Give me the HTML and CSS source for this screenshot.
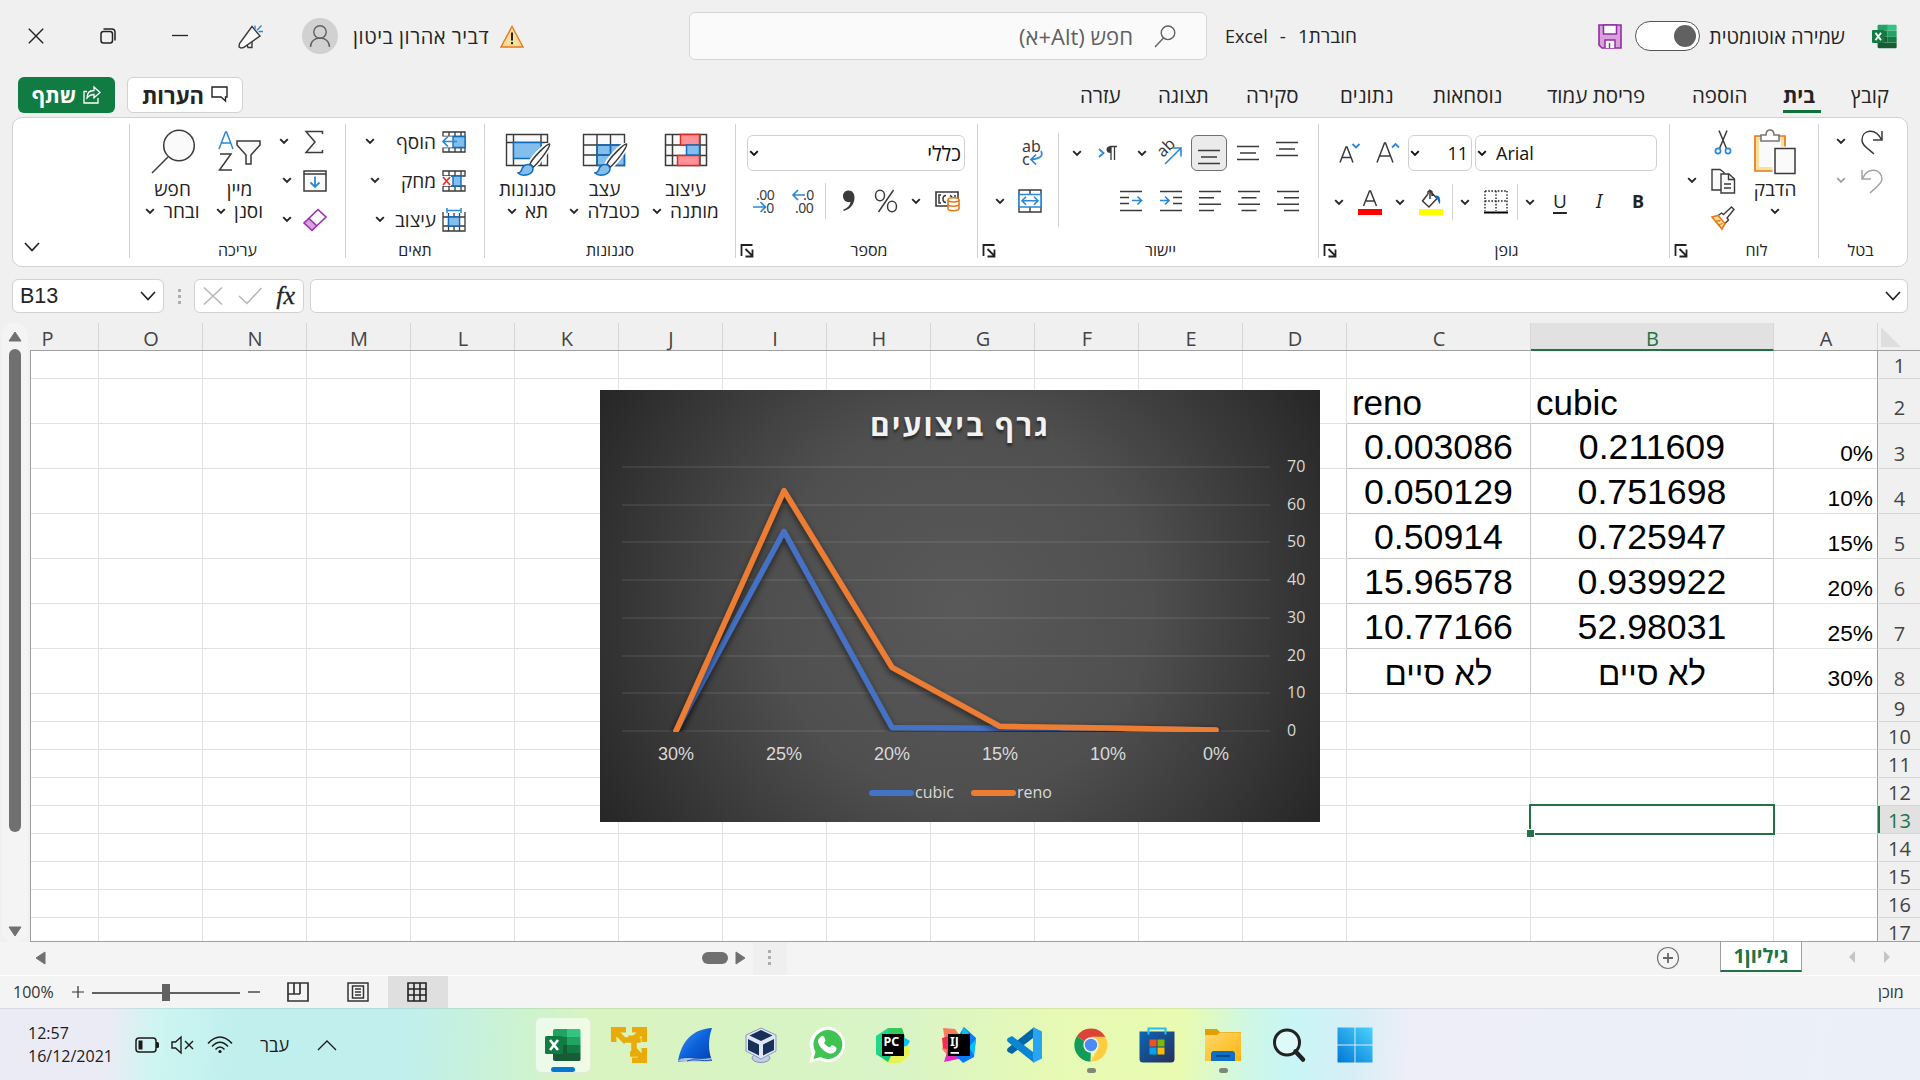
FILE: index.html
```html
<!DOCTYPE html>
<html lang="he">
<head>
<meta charset="utf-8">
<title>חוברת1 - Excel</title>
<link rel="stylesheet" href="styles.css">
</head>
<body>
<svg class="defs" width="0" height="0">
  <symbol id="chev" viewBox="0 0 10 7"><path d="M1.2 1.2 5 5l3.800-3.800" fill="none" stroke="currentColor" stroke-width="1.900"/></symbol>
  <symbol id="chev-lg" viewBox="0 0 16 10"><path d="M1 1l7 7.500L15 1" fill="none" stroke="currentColor" stroke-width="1.700"/></symbol>
  <symbol id="launch" viewBox="0 0 14 14"><path d="M1 12V1h11M5 5l7 7M12 5.500V12.500H5" fill="none" stroke="#222" stroke-width="1.800"/></symbol>
  <symbol id="excel" viewBox="0 0 36 34">
    <path d="M10 1h13v8H8V3q0-2 2-2z" fill="#21a366"/><path d="M22 1h12q1.500 0 1.500 1.500V9H22z" fill="#33c481"/>
    <path d="M8 9h14v8H8z" fill="#107c41"/><path d="M22 9h13.500v8H22z" fill="#21a366"/>
    <path d="M8 17h14v8H8z" fill="#185c37"/><path d="M22 17h13.500v8H22z" fill="#107c41"/>
    <path d="M8 25h27.500v6.500Q35.500 33 34 33H10q-2 0-2-2z" fill="#185c37"/>
    <rect x="0" y="8" width="18" height="18" rx="1.500" fill="#107c41"/>
    <path d="M5 12l8 10M13 12L5 22" stroke="#fff" stroke-width="2.600"/>
  </symbol>
  <symbol id="brush" viewBox="0 0 34 34">
    <path d="M32.500 1c-2-1-17 14-19.500 20l3.500 3C21 20 34 4 32.500 1z" fill="#fff" stroke="#fff" stroke-width="5"/>
    <path d="M32.500 1c-2-1-17 14-19.500 20l3.500 3C21 20 34 4 32.500 1z" fill="#fff" stroke="#3b3a39" stroke-width="1.500"/>
    <path d="M1 30c4-.500 3-3 5-6 2.500-3.500 8-3 9.500 0 1.500 3.500-1 7-5 7.700C7 32.500 3 32 1 30z" fill="#83beec" stroke="#0f6cbd" stroke-width="1.500"/>
  </symbol>
</svg>

<header class="title-bar">
  <svg width="16" height="16" viewBox="0 0 16 16"><path d="M.8.800l14.400 14.400M15.200.800L.8 15.200" stroke="#222" stroke-width="1.400"/></svg>
  <svg width="16" height="16" viewBox="0 0 16 16" fill="none" stroke="#222" stroke-width="1.500"><rect x="1" y="3.500" width="11.500" height="11.500" rx="2.500"/><path d="M3.500 1h8.200Q15 1 15 4.200v8.300"/></svg>
  <svg width="16" height="16" viewBox="0 0 16 16"><path d="M0 7.500h16" stroke="#222" stroke-width="1.300"/></svg>
  <svg width="26" height="25" viewBox="0 0 26 25" fill="none" stroke="#3b3a39" stroke-width="1.400"><path d="M14 2.500L1.500 19.500 1 22.800l2 1.300 2.500-.6L22 12z" fill="#fafafa"/><path d="M9 21l1 2.500h4V18"/><path d="M17 1.500V5M23.500 1.500L19 6.200M20.500 7.500H25" stroke="#2b88d8"/></svg>
  <svg width="36" height="36" viewBox="0 0 36 36" fill="none" stroke="#616161" stroke-width="1.400"><circle cx="18" cy="18" r="18" fill="#d1d1d1" stroke="none"/><circle cx="18" cy="14" r="6.200"/><path d="M8.500 29c0-12 19-12 19 0"/></svg>
  <span class="user-name" dir="rtl">דביר אהרון ביטון</span>
  <svg width="24" height="23" viewBox="0 0 24 23"><path d="M12 1.500L23 22H1z" fill="#fbdf9d" stroke="#e8781a" stroke-width="1.400"/><path d="M12 7.500v8M12 17v2.300" stroke="#222" stroke-width="2"/></svg>
  <div class="search">
    <span dir="rtl">חפש (Alt+א)</span>
    <svg width="22" height="23" viewBox="0 0 22 23" fill="none" stroke="#616161" stroke-width="1.400"><circle cx="14" cy="7.800" r="6.800"/><path d="M9.500 13L1 22"/></svg>
  </div>
  <div class="doc-name" dir="rtl"><span>חוברת1</span><span>-</span><span>Excel</span></div>
  <svg width="24" height="25" viewBox="0 0 24 25"><path d="M1 1h22v23H4l-3-3z" fill="#d9a0dd" stroke="#8f2fa0" stroke-width="1.600"/><path d="M5.500 1h13v9h-13zM7 24v-8h10v8" fill="#fafafa" stroke="#8f2fa0" stroke-width="1.500"/><path d="M11.500 19v5" stroke="#8f2fa0" stroke-width="1.400"/></svg>
  <div class="toggle"><i></i></div>
  <span class="autosave" dir="rtl">שמירה אוטומטית</span>
  <svg width="25" height="25" viewBox="0 0 36 34" preserveAspectRatio="none"><use href="#excel"/></svg>
</header>

<nav class="tabs">
  <button class="share"><b dir="rtl">שתף</b><svg width="18" height="18" viewBox="0 0 18 18" fill="none" stroke="#fff" stroke-width="1.300"><path d="M4 5.500H1V17h14v-5"/><path d="M4 12c0-5 3-7.500 7-7.500V1l6 5.500-6 5.300V8.500C8 8.500 6 9.500 4 12z"/></svg></button>
  <button class="comments"><b dir="rtl">הערות</b><svg width="17" height="17" viewBox="0 0 17 17" fill="none" stroke="#222" stroke-width="1.400"><path d="M1 1h15v10h-1.500v4L10 11H1z"/></svg></button>
  <span>עזרה</span><span>תצוגה</span><span>סקירה</span><span>נתונים</span><span>נוסחאות</span><span>פריסת עמוד</span><span>הוספה</span><span class="active">בית</span><span>קובץ</span>
</nav>

<section class="ribbon">
  <div class="group g-collapse"><svg class="collapse" width="16" height="10"><use href="#chev-lg"/></svg></div>

  <div class="group g-edit">
    <div class="body">
      <div class="big"><svg width="46" height="50" viewBox="0 0 46 50" fill="none" stroke="#3b3a39" stroke-width="1.500"><circle cx="29" cy="21.500" r="15.300" fill="#fafafa"/><path d="M18 33L2 49"/></svg><span>חפש</span><span>ובחר<svg class="cv"><use href="#chev"/></svg></span></div>
      <div class="big"><svg width="46" height="50" viewBox="0 0 46 50" fill="none" stroke-width="1.500"><path d="M2 25L8.500 8h1L16 25M4.500 19h9" stroke="#2b88d8"/><path d="M3 30h11L2.500 46H15" stroke="#3b3a39"/><path d="M20 17h23v4l-9 10v9h-5v-9l-9-10z" fill="#fafafa" stroke="#3b3a39"/></svg><span>מיין</span><span>וסנן<svg class="cv"><use href="#chev"/></svg></span></div>
      <div class="stack narrow">
        <div class="w"><svg class="cv"><use href="#chev"/></svg><svg width="24" height="24" viewBox="0 0 24 24" fill="none" stroke="#3b3a39" stroke-width="1.500"><path d="M20.500 4V1.500H4L13 12 4 22.500h16.500V20"/></svg></div>
        <div><svg class="cv"><use href="#chev"/></svg><svg width="24" height="22" viewBox="0 0 24 22" fill="none" stroke="#3b3a39" stroke-width="1.500"><path d="M1 1h22v20H1zM1 4h22" fill="#fafafa"/><path d="M12 6.500V17M7.500 12.500L12 17l4.500-4.500" stroke="#2b88d8" stroke-width="1.800"/></svg></div>
        <div><svg class="cv"><use href="#chev"/></svg><svg width="24" height="24" viewBox="0 0 24 24"><path d="M15 1.500L23 9 9 22.500 1 15z" fill="#fafafa"/><path d="M6 10.500l8 7.500-5 4.500L1 15z" fill="#d9a0dd"/><path d="M15 1.500L23 9 9 22.500 1 15zM6 10.500l8 7.500" fill="none" stroke="#9a2fae" stroke-width="1.600"/></svg></div>
      </div>
    </div>
    <div class="label"><span>עריכה</span></div>
  </div>

  <div class="group g-cells">
    <div class="body">
      <div class="stack cells">
        <div><svg class="cv"><use href="#chev"/></svg><span>הוסף</span><svg width="24" height="22" viewBox="0 0 24 22" fill="none"><path d="M1 1h22v20H1zM1 5.500h22M1 16.500h22M7 1v20M13 1v20M19 1v20" fill="#fff" stroke="#3b3a39" stroke-width="1.300"/><path d="M0 5.500h23v11H0z" fill="#fff"/><path d="M11 5.500h12v11H11z" fill="#83beec" stroke="#0f6cbd" stroke-width="1.300"/><path d="M1 10.500h14M6 5.500l-5 5 5 5" stroke="#2b88d8" stroke-width="1.700"/></svg></div>
        <div><svg class="cv"><use href="#chev"/></svg><span>מחק</span><svg width="24" height="22" viewBox="0 0 24 22" fill="none"><path d="M1 1h22v5H1zM1 16h22v5H1zM7 1v5M13 1v5M19 1v5M7 16v5M13 16v5M19 16v5" stroke="#3b3a39" stroke-width="1.300"/><path d="M0 6h9v10H0z" fill="#fff"/><path d="M11 6h8v10h-8z" fill="#83beec" stroke="#0f6cbd" stroke-width="1.400"/><path d="M1 7l7 8M8 7l-7 8" stroke="#e8352c" stroke-width="1.800"/></svg></div>
        <div><svg class="cv"><use href="#chev"/></svg><span>עיצוב</span><svg width="24" height="24" viewBox="0 0 24 24" fill="none"><path d="M1 4v19h22V4M1 9h22M1 18h22M6.500 5v18M12 5v18M17.500 5v18" stroke="#3b3a39" stroke-width="1.300"/><path d="M6.500 9h11v9h-11z" fill="#83beec" stroke="#0f6cbd" stroke-width="1.300"/><path d="M5 2.500h14M5 0v5M19 0v5" stroke="#2b88d8" stroke-width="1.500"/></svg></div>
      </div>
    </div>
    <div class="label"><span>תאים</span></div>
  </div>

  <div class="group g-styles">
    <div class="body">
      <div class="big"><svg width="46" height="50" viewBox="0 0 46 50" fill="none"><path d="M1.500 10.500h41v31h-41zM1.500 18.500h41M8.500 10.500v31M36 10.500v31" fill="#fafafa" stroke="#3b3a39" stroke-width="1.400"/><path d="M8.500 18.500H36v16H8.500z" fill="#83beec" stroke="#0f6cbd" stroke-width="1.400"/><use href="#brush" x="12" y="19" width="34" height="34"/></svg><span>סגנונות</span><span>תא<svg class="cv"><use href="#chev"/></svg></span></div>
      <div class="big"><svg width="46" height="50" viewBox="0 0 46 50" fill="none"><path d="M1.500 10.500h41v31h-41z" fill="#fafafa"/><path d="M15 21h27.500v20.500H15z" fill="#83beec"/><path d="M1.500 10.500h41v31h-41zM1.500 21h41M1.500 31h41M15 10.500v31M28.500 10.500v31" stroke="#3b3a39" stroke-width="1.400"/><path d="M15 21h27.500M15 31h27.500M15 21v20.500M28.500 21v20.500M42.500 21v20.500H15" stroke="#0f6cbd" stroke-width="1.400"/><use href="#brush" x="12" y="19" width="34" height="34"/></svg><span>עצב</span><span>כטבלה<svg class="cv"><use href="#chev"/></svg></span></div>
      <div class="big"><svg width="46" height="50" viewBox="0 0 46 50" fill="none" stroke-width="1.500"><path d="M2.500 10.500h41v31h-41zM2.500 21h41M2.500 31.500h41M9.500 10.500v31M37 10.500v31" fill="#fafafa" stroke="#3b3a39"/><path d="M17.500 10.500h19V21h-19zM14.500 31.500h22v10h-22z" fill="#ff9296" stroke="#d92c20"/><path d="M23.500 21h13v10h-13z" fill="#83beec" stroke="#0f6cbd"/></svg><span>עיצוב</span><span>מותנה<svg class="cv"><use href="#chev"/></svg></span></div>
    </div>
    <div class="label"><span>סגנונות</span></div>
  </div>

  <div class="group g-number">
    <div class="body rows">
      <div class="combo wide"><svg class="cv"><use href="#chev"/></svg><span>כללי</span></div>
      <div class="tool-row number-row">
        <svg width="26" height="26" viewBox="0 0 26 26"><text x="3" y="11.500" class="dec">.00</text><text x="10" y="25" class="dec">.0</text><path d="M0 19h12M7.500 14l5 5-5 5" fill="none" stroke="#2b88d8" stroke-width="1.700"/></svg>
        <svg width="26" height="26" viewBox="0 0 26 26"><text x="11" y="11.500" class="dec">.0</text><text x="3" y="25" class="dec">.00</text><path d="M1 7h12M6 2L1 7l5 5" fill="none" stroke="#2b88d8" stroke-width="1.700"/></svg>
        <i class="sep"></i>
        <svg width="14" height="24" viewBox="0 0 14 24"><path d="M6 1.500c4-.300 6.500 2.500 6.500 7 0 7-4.500 12-11 13.500v-1.500c4-1.500 6.500-4 7-7.500C3 14 1 10 1 7c0-3 2.200-5.300 5-5.500z" fill="#3b3a39"/></svg>
        <svg width="24" height="24" viewBox="0 0 24 24" fill="none" stroke="#3b3a39" stroke-width="1.500"><ellipse cx="6" cy="6.500" rx="4.500" ry="5.200"/><ellipse cx="18" cy="17.500" rx="4.500" ry="5.200"/><path d="M19.500 1L4.500 23"/></svg>
        <svg class="cv"><use href="#chev"/></svg>
        <svg width="26" height="22" viewBox="0 0 26 22" fill="none"><path d="M1 2h22v14H1z" stroke="#3b3a39" stroke-width="1.600"/><path d="M6 5H4v8h2M11 5.500q-3 0-3 3.500t3 3.500M15 5.500q2 1 2 2M20 5v3" stroke="#3b3a39" stroke-width="1.500"/><path d="M13 10c0-3 11-3 11 0v8.500c0 3-11 3-11 0z" fill="#fff" stroke="#e8781a" stroke-width="1.600"/><path d="M13 10c0 2.500 11 2.500 11 0M13 14.300c0 2.500 11 2.500 11 0" stroke="#e8781a" stroke-width="1.500"/></svg>
      </div>
    </div>
    <div class="label"><svg width="15" height="14"><use href="#launch"/></svg><span>מספר</span></div>
  </div>

  <div class="group g-align">
    <div class="body">
      <div class="merge-col">
        <div><svg width="24" height="26" viewBox="0 0 24 26"><text x="1" y="11.500" class="abc">ab</text><text x="1" y="25" class="abc">c</text><path d="M20 11c3 6-3 8-9.500 8.500M15 14.500l-5 5 5 5" fill="none" stroke="#2b88d8" stroke-width="1.700"/></svg></div>
        <div class="merge"><svg class="cv"><use href="#chev"/></svg><svg width="24" height="24" viewBox="0 0 24 24" fill="none"><path d="M1 1h22v22H1zM12 1v22" stroke="#3b3a39" stroke-width="1.400"/><path d="M1 5.500h22v12.500H1z" fill="#fff" stroke="#2b88d8" stroke-width="1.600"/><path d="M4 11.700h16M8 7.700l-4 4 4 4M16 7.700l4 4-4 4" stroke="#2b88d8" stroke-width="1.600"/></svg></div>
      </div>
      <i class="sep tall"></i>
      <div class="rows">
        <div class="tool-row align-top">
          <svg class="cv"><use href="#chev"/></svg>
          <svg width="20" height="16" viewBox="0 0 20 16" fill="none"><path d="M1 4l4.500 4L1 12" stroke="#2b88d8" stroke-width="1.800"/><path d="M19 1.500h-7M13 1.500V15M16.500 1.500V15" stroke="#3b3a39" stroke-width="1.300"/><path d="M13 1q-4.500 0-4.500 3.500T13 8z" fill="#3b3a39"/></svg>
          <svg class="cv"><use href="#chev"/></svg>
          <svg width="26" height="26" viewBox="0 0 26 26"><text transform="translate(6 18) rotate(-45)" class="abc">ab</text><path d="M8 24L24 8M15.500 8H24v8.500" fill="none" stroke="#2b88d8" stroke-width="1.600"/></svg>
          <span class="pressed"><svg width="22" height="16" viewBox="0 0 22 16"><path d="M0 1.500h22M3 8h16M0 14.500h22" class="ln"/></svg></span>
          <svg width="22" height="16" viewBox="0 0 22 16"><path d="M0 1.500h22M3 8h16M0 14.500h22" class="ln"/></svg>
          <svg class="up" width="22" height="16" viewBox="0 0 22 16"><path d="M0 1.500h22M3 8h16M0 14.500h22" class="ln"/></svg>
        </div>
        <div class="tool-row align-bottom">
          <svg width="22" height="22" viewBox="0 0 22 22"><path d="M0 1.500h22M0 7.500h9M0 13.500h9M0 20.500h22" class="ln"/><path d="M12 10.500h9M17.500 6.500l4 4-4 4" fill="none" stroke="#2b88d8" stroke-width="1.700"/></svg>
          <svg width="22" height="22" viewBox="0 0 22 22"><path d="M0 1.500h22M13 7.500h9M13 13.500h9M0 20.500h22" class="ln"/><path d="M0 10.500h9M5 6.500l4 4-4 4" fill="none" stroke="#2b88d8" stroke-width="1.700"/></svg>
          <svg width="22" height="22" viewBox="0 0 22 22"><path d="M0 1.500h22M0 7.800h15M0 14.200h22M0 20.500h15" class="ln"/></svg>
          <svg width="22" height="22" viewBox="0 0 22 22"><path d="M0 1.500h22M3.500 7.800h15M0 14.200h22M3.500 20.500h15" class="ln"/></svg>
          <svg width="22" height="22" viewBox="0 0 22 22"><path d="M0 1.500h22M7 7.800h15M0 14.200h22M7 20.500h15" class="ln"/></svg>
        </div>
      </div>
    </div>
    <div class="label"><svg width="15" height="14"><use href="#launch"/></svg><span>יישור</span></div>
  </div>

  <div class="group g-font">
    <div class="body rows">
      <div class="tool-row font-top">
        <svg width="22" height="24" viewBox="0 0 22 24" fill="none"><path d="M1 21.500L7 6h1l6 15.500M3 16.500h9" stroke="#3b3a39" stroke-width="1.500"/><path d="M13.500 3l3.500 3.500L20.500 3" stroke="#2b88d8" stroke-width="1.800"/></svg>
        <svg width="24" height="24" viewBox="0 0 24 24" fill="none"><path d="M1 21.500L8.500 2h1L17 21.500M4 15h10.500" stroke="#3b3a39" stroke-width="1.500"/><path d="M16 6.500L19.500 3 23 6.500" stroke="#2b88d8" stroke-width="1.800"/></svg>
        <div class="combo size"><svg class="cv"><use href="#chev"/></svg><span>11</span></div>
        <div class="combo face"><svg class="cv"><use href="#chev"/></svg><span>Arial</span></div>
      </div>
      <div class="tool-row font-bottom">
        <svg class="cv"><use href="#chev"/></svg>
        <svg width="24" height="26" viewBox="0 0 24 26"><path d="M5.500 17L11.500 2h1l6 15M7.500 12h9" fill="none" stroke="#3b3a39" stroke-width="1.500"/><path d="M0 20h24v6H0z" fill="#f00"/></svg>
        <svg class="cv"><use href="#chev"/></svg>
        <svg width="24" height="26" viewBox="0 0 24 26"><path d="M9 5L3.500 12l6.500 6 8-8.500L11 2v8M9 5V3q2-3 4 0v4" fill="none" stroke="#3b3a39" stroke-width="1.500"/><path d="M16 7c4-2 6 2 5 8-2-1-1.500-4-3-5z" fill="#0f6cbd"/><path d="M0 20h24v6H0z" fill="#ff0"/></svg>
        <i class="sep"></i>
        <svg class="cv"><use href="#chev"/></svg>
        <svg width="24" height="24" viewBox="0 0 24 24" fill="none"><path d="M1 1h22M1 11h22M1 1v20M12 1v20M23 1v20" stroke="#222" stroke-width="1.400" stroke-dasharray="1.600 1.600"/><path d="M0 22.500h24" stroke="#000" stroke-width="2"/></svg>
        <i class="sep"></i>
        <svg class="cv"><use href="#chev"/></svg>
        <span class="fmt u">U</span><span class="fmt i">I</span><span class="fmt b">B</span>
      </div>
    </div>
    <div class="label"><svg width="15" height="14"><use href="#launch"/></svg><span>גופן</span></div>
  </div>

  <div class="group g-clip">
    <div class="body">
      <div class="stack clip">
        <div class="solo"><svg width="24" height="26" viewBox="0 0 24 26" fill="none"><path d="M8 1.500l7.500 18M16 1.500l-7.500 18" stroke="#3b3a39" stroke-width="1.500"/><circle cx="7" cy="22" r="2.600" stroke="#2b88d8" stroke-width="1.700"/><circle cx="17" cy="22" r="2.600" stroke="#2b88d8" stroke-width="1.700"/></svg></div>
        <div><svg class="cv"><use href="#chev"/></svg><svg width="24" height="26" viewBox="0 0 24 26" stroke="#3b3a39" stroke-width="1.400"><path d="M1 1.500h8l4 3V22H1z" fill="#fafafa"/><path d="M10 6h8l5.500 5v14H10z" fill="#fafafa"/><path d="M17.500 6v5.500h6M13 16h7M13 20h7" fill="none"/></svg></div>
        <div class="solo"><svg width="24" height="24" viewBox="0 0 24 24"><path d="M12.500 8.500l8-7.500 2.500 2.500-7 8.500 1.500 2-4 4-7-8 4-3z" fill="#fff" stroke="#3b3a39" stroke-width="1.400"/><path d="M1 11l6-1.500 7 8L11 23z" fill="#fbdf9d" stroke="#e8781a" stroke-width="1.600"/><path d="M4 15.500l5.500-1M7 19l4.500-1.500" stroke="#e8781a" stroke-width="1.300"/></svg></div>
      </div>
      <div class="big paste"><svg width="44" height="50" viewBox="0 0 44 50" fill="none"><path d="M2 12h30v35H2z" fill="#fbdf9d" stroke="#e8781a" stroke-width="1.700"/><path d="M6 16h22v27H6z" fill="#fafafa"/><path d="M8 17v-6h5q0-5 4-5t4 5h5v6z" fill="#fff" stroke="#797775" stroke-width="1.600"/><path d="M21.500 24.500h20.500v25H21.500z" fill="#fafafa" stroke="#fff" stroke-width="4"/><path d="M22 24.500h20v25H22z" fill="#fafafa" stroke="#3b3a39" stroke-width="1.500"/></svg><span>הדבק</span><span><svg class="cv"><use href="#chev"/></svg></span></div>
    </div>
    <div class="label"><svg width="15" height="14"><use href="#launch"/></svg><span>לוח</span></div>
  </div>

  <div class="group g-undo">
    <div class="body">
      <div class="stack undo">
        <div><svg class="cv"><use href="#chev"/></svg><svg width="24" height="26" viewBox="0 0 24 26" fill="none" stroke="#3b3a39" stroke-width="1.500"><path d="M22 2v9h-9M21.500 10.500C15-2 2 1 2 11c0 5 4 7 12 14"/></svg></div>
        <div class="off"><svg class="cv"><use href="#chev"/></svg><svg width="24" height="26" viewBox="0 0 24 26" fill="none" stroke="#a3a3a3" stroke-width="1.500"><path d="M2 2v9h9M2.500 10.500C8-2 22 1 22 11c0 5-6 8-12 14"/></svg></div>
      </div>
    </div>
    <div class="label"><span>בטל</span></div>
  </div>
</section>

<section class="formula-bar">
  <div class="box name-box"><span>B13</span><svg width="16" height="10"><use href="#chev-lg"/></svg></div>
  <i class="dots"></i>
  <div class="box fx"><svg width="20" height="20" viewBox="0 0 20 20"><path d="M1 1.500l18 17M19 1.500l-18 17" stroke="#b5b5b5" stroke-width="1.500"/></svg><svg width="24" height="18" viewBox="0 0 24 18"><path d="M1 9l8 7.500L23.500 1" fill="none" stroke="#b5b5b5" stroke-width="1.500"/></svg><em>fx</em></div>
  <div class="box input"><svg width="16" height="10"><use href="#chev-lg"/></svg></div>
</section>

<main class="sheet">
  <aside class="vscroll">
    <svg width="14" height="11" viewBox="0 0 14 11"><path d="M7 1l6 9H1z" fill="#707070" stroke="#707070" stroke-linejoin="round"/></svg>
    <i></i>
    <svg class="down" width="14" height="11" viewBox="0 0 14 11"><path d="M7 10l6-9H1z" fill="#707070" stroke="#707070" stroke-linejoin="round"/></svg>
  </aside>
  <div class="grid">
    <div class="heads">
      <span>P</span><span>O</span><span>N</span><span>M</span><span>L</span><span>K</span><span>J</span><span>I</span><span>H</span><span>G</span><span>F</span><span>E</span><span>D</span><span>C</span><span class="sel">B</span><span>A</span><span class="corner"><i></i></span>
    </div>
    <div class="row"><div class="blank"></div><div></div><div></div><div></div><b>1</b></div>
    <div class="row tall first"><div class="blank"></div><div class="t">reno</div><div class="t">cubic</div><div></div><b>2</b></div>
    <div class="row tall data"><div class="blank"></div><div>0.003086</div><div>0.211609</div><div>0%</div><b>3</b></div>
    <div class="row tall data"><div class="blank"></div><div>0.050129</div><div>0.751698</div><div>10%</div><b>4</b></div>
    <div class="row tall data"><div class="blank"></div><div>0.50914</div><div>0.725947</div><div>15%</div><b>5</b></div>
    <div class="row tall data"><div class="blank"></div><div>15.96578</div><div>0.939922</div><div>20%</div><b>6</b></div>
    <div class="row tall data"><div class="blank"></div><div>10.77166</div><div>52.98031</div><div>25%</div><b>7</b></div>
    <div class="row tall data"><div class="blank"></div><div class="he" dir="rtl">לא סיים</div><div class="he" dir="rtl">לא סיים</div><div>30%</div><b>8</b></div>
    <div class="row"><div class="blank"></div><div></div><div></div><div></div><b>9</b></div>
    <div class="row"><div class="blank"></div><div></div><div></div><div></div><b>10</b></div>
    <div class="row"><div class="blank"></div><div></div><div></div><div></div><b>11</b></div>
    <div class="row"><div class="blank"></div><div></div><div></div><div></div><b>12</b></div>
    <div class="row current"><div class="blank"></div><div></div><div><i class="selection"></i></div><div></div><b>13</b></div>
    <div class="row"><div class="blank"></div><div></div><div></div><div></div><b>14</b></div>
    <div class="row"><div class="blank"></div><div></div><div></div><div></div><b>15</b></div>
    <div class="row"><div class="blank"></div><div></div><div></div><div></div><b>16</b></div>
    <div class="row last"><div class="blank"></div><div></div><div></div><div></div><b>17</b></div>

    <svg class="chart" width="720" height="432" viewBox="600 390 720 432">
      <defs>
        <radialGradient id="bg" gradientUnits="userSpaceOnUse" cx="960" cy="606" r="420"><stop offset="0" stop-color="#595959"/><stop offset=".45" stop-color="#4f4f4f"/><stop offset="1" stop-color="#262626"/></radialGradient>
        <filter id="sh" x="-10%" y="-10%" width="120%" height="125%"><feDropShadow dx="0" dy="3" stdDeviation="3" flood-color="#000" flood-opacity=".6"/></filter>
        <clipPath id="plot"><path d="M600 390h720v342H600z"/></clipPath>
      </defs>
      <path d="M600 390h720v432H600z" fill="url(#bg)"/>
      <path d="M622 467h648M622 505h648M622 542h648M622 580h648M622 618h648M622 656h648M622 693h648M622 731h648" stroke="#fff" stroke-opacity=".1" stroke-width="1.500"/>
      <text class="ch-title" x="960" y="436" direction="rtl">גרף ביצועים</text>
      <g clip-path="url(#plot)"><g fill="none" stroke-width="5.500" stroke-linejoin="round" stroke-linecap="round">
        <polyline filter="url(#sh)" stroke="#4472c4" points="676,731 784,531.300 892,727.500 1000,728.300 1108,728.200 1216,730.200"/>
        <polyline filter="url(#sh)" stroke="#ed7d31" points="676,731 784,490.600 892,667.300 1000,726.300 1108,728 1216,730"/>
      </g></g>
      <g class="ch-y"><text x="1287" y="472">70</text><text x="1287" y="510">60</text><text x="1287" y="547">50</text><text x="1287" y="585">40</text><text x="1287" y="623">30</text><text x="1287" y="661">20</text><text x="1287" y="698">10</text><text x="1287" y="736">0</text></g>
      <g class="ch-x"><text x="676" y="760">30%</text><text x="784" y="760">25%</text><text x="892" y="760">20%</text><text x="1000" y="760">15%</text><text x="1108" y="760">10%</text><text x="1216" y="760">0%</text></g>
      <path d="M872 793h39" stroke="#4472c4" stroke-width="6" stroke-linecap="round"/><text class="ch-l" x="915" y="798">cubic</text>
      <path d="M974 793h39" stroke="#ed7d31" stroke-width="6" stroke-linecap="round"/><text class="ch-l" x="1017" y="798">reno</text>
    </svg>
  </div>
</main>

<section class="sheet-tabs">
  <div class="hscroll"><svg width="12" height="14" viewBox="0 0 12 14"><path d="M10 1v12L1 7z" fill="#707070" stroke="#707070" stroke-linejoin="round"/></svg><i></i><svg width="12" height="14" viewBox="0 0 12 14"><path d="M1 1v12l9-6z" fill="#707070" stroke="#707070" stroke-linejoin="round"/></svg></div>
  <div class="grip"><i class="dots"></i></div>
  <svg class="plus" width="24" height="24" viewBox="0 0 24 24" fill="none"><circle cx="12" cy="12" r="10.500" stroke="#767676" stroke-width="1.200"/><path d="M7 12h10M12 7v10" stroke="#666" stroke-width="1.800"/></svg>
  <b class="tab" dir="rtl">גיליון1</b>
  <svg class="nav" width="8" height="12" viewBox="0 0 8 12"><path d="M7 0v12L1 6z" fill="#c4c4c4"/></svg>
  <svg class="nav" width="8" height="12" viewBox="0 0 8 12"><path d="M1 0v12l6-6z" fill="#c4c4c4"/></svg>
</section>

<section class="status">
  <span>100%</span>
  <svg width="12" height="12" viewBox="0 0 12 12"><path d="M6 0v12M0 6h12" stroke="#333" stroke-width="1.200"/></svg>
  <div class="zoom"><i></i></div>
  <svg width="12" height="12" viewBox="0 0 12 12"><path d="M0 6h12" stroke="#333" stroke-width="1.300"/></svg>
  <svg width="22" height="20" viewBox="0 0 22 20" fill="none" stroke="#333" stroke-width="1.700"><path d="M1 1h20v18H1zM7 1v11M13 1v11M1 12h12"/></svg>
  <svg width="22" height="20" viewBox="0 0 22 20" fill="none" stroke="#333" stroke-width="1.500"><path d="M1 1h20v18H1zM5.500 4h11v12h-11zM8 7h6M8 10h6M8 13h6"/></svg>
  <div class="view"><svg width="20" height="20" viewBox="0 0 20 20" fill="none" stroke="#222" stroke-width="1.600"><path d="M1 1h18v18H1zM1 7h18M1 13h18M7 1v18M13 1v18"/></svg></div>
  <span class="ready">מוכן</span>
</section>

<footer class="taskbar">
  <div class="clock"><span>12:57</span><span>16/12/2021</span></div>
  <svg width="24" height="16" viewBox="0 0 24 16"><rect x="1" y="1" width="20" height="14" rx="3" fill="none" stroke="#1b1b1b" stroke-width="1.500"/><path d="M3.500 3.500h4v9h-4z" fill="#1b1b1b"/><path d="M21 5h1.500q1.500 0 1.500 1.500v3q0 1.500-1.500 1.500H21z" fill="#1b1b1b"/></svg>
  <svg width="24" height="18" viewBox="0 0 24 18" fill="none" stroke="#1b1b1b" stroke-width="1.400"><path d="M1 6h3.500L10 1v16l-5.500-5H1zM14 5l8 8M22 5l-8 8"/></svg>
  <svg width="26" height="18" viewBox="0 0 26 18" fill="none" stroke="#1b1b1b" stroke-width="1.500"><path d="M1 7.500q12-13 24 0M5 10.500q8-8.500 16 0M8.500 13.500q4.500-5 9 0"/><circle cx="13" cy="15.500" r="1.600" fill="#1b1b1b" stroke="none"/></svg>
  <span class="lang">עבר</span>
  <svg width="20" height="12" viewBox="0 0 20 12"><path d="M1 11l9-9 9 9" fill="none" stroke="#1b1b1b" stroke-width="1.300"/></svg>
  <div class="apps">
    <div class="open"><svg width="36" height="34"><use href="#excel"/></svg></div>
    <div><svg width="36" height="36" viewBox="0 0 36 36" fill="none" stroke="#e9ab07" stroke-width="5.500"><path d="M2.700 15V2.700H15M4 4l11 11M21 2.700h12.300V15M32 4L21 13M14 13h6v-4.500M20 13h7v-2M23 13v14h-4M33.300 21v12.300H21M32 32l-9-10"/></svg></div>
    <div><svg width="36" height="36" viewBox="0 0 36 36"><defs><linearGradient id="fin" x1="0" y1="0" x2="1" y2="1"><stop offset="0" stop-color="#3f9bf0"/><stop offset=".5" stop-color="#0c62dc"/><stop offset="1" stop-color="#063fa8"/></linearGradient></defs><path d="M35 1C16 2 4 14 1 35c12-2 24-2 34-1-4-11-4-22 0-33z" fill="url(#fin)"/><path d="M2 33c8-6 15 1 32-2v3.500H1z" fill="#a9bfe6"/><path d="M5 31c9-2 15 2 29-1M10 34c8-3 15 1 24-1" stroke="#164fa8" fill="none"/></svg></div>
    <div><svg width="32" height="36" viewBox="0 0 32 36"><ellipse cx="16" cy="31" rx="9" ry="4.500" fill="#c3cde4" stroke="#8493b3"/><path d="M16 1L31 8v16L16 32 1 24V8z" fill="#dfe6f5" stroke="#8a9abf"/><path d="M16 3l11.500 5.500L16 14 4.500 8.500zM3 12l11 5.500v11L3 23zM29 12l-11 5.500v11L29 23z" fill="#182f5a"/></svg></div>
    <div><svg width="36" height="36" viewBox="0 0 36 36"><path d="M18.500 0a17.500 17.500 0 1 1-8 33L0 36l3-10A17.500 17.500 0 0 1 18.500 0z" fill="#fff"/><path d="M18.500 3a14.500 14.500 0 1 1-7 27l-7 2 2-7a14.500 14.500 0 0 1 12-22z" fill="#3fc351"/><path d="M12 9.500c2-1.500 3-.5 4.500 4-2 3-1.500 2.500 1 5 2.500 2 3 2.500 5 0 1-1 4.500 1.500 5 2.500 0 4.500-4 6-7 5.500C14 25 7 16 9.500 12z" fill="#fff"/></svg></div>
    <div><svg width="36" height="36" viewBox="0 0 36 36"><path d="M1 9L13 1l9 6-8 26-13-6z" fill="#21d789"/><path d="M13 1l14 0 3 9-14 4z" fill="#35c95a"/><path d="M27 9l8 5-5 9-8-8z" fill="#07c3f2"/><path d="M34 18l1 9-9 9H14L7 33l12-10z" fill="#e8f254"/><path d="M1 27l12 8 3-6z" fill="#15c77b"/><path d="M7 7h22v22H7z" fill="#000"/><text x="8.500" y="18.500" class="jb">PC</text><path d="M9.500 25h8.500v1.800H9.500z" fill="#fff"/></svg></div>
    <div><svg width="36" height="36" viewBox="0 0 36 36"><path d="M2 1l12 1 6 8L8 30 1 22l3-8z" fill="#fe7a5c"/><path d="M1 11l10-3v16l-9-3z" fill="#fe2857"/><path d="M3 35l4-13 15 9z" fill="#e62cc0"/><path d="M18 8l5-8 12 11-2 19-11 6-8-8z" fill="#087cfa"/><path d="M22 0l6 6-8 5zM28 20l7-8-2 16z" fill="#07c3f2"/><path d="M7 7h22v22H7z" fill="#000"/><text x="9" y="18.500" class="jb">IJ</text><path d="M9.500 25h8.500v1.800H9.500z" fill="#fff"/></svg></div>
    <div><svg width="36" height="36" viewBox="0 0 36 36"><path d="M26 1v10L5 27 1 25q-2-2 0-4z" fill="#0065a9"/><path d="M26 35V25L5 9 1 11q-2 2 0 4z" fill="#0a86d1"/><path d="M26 0l9 4.500v27L26 36z" fill="#27a4f2"/></svg></div>
    <div class="run"><svg width="34" height="34" viewBox="0 0 34 34"><path d="M17 17L2.700 8.500A16.600 16.600 0 0 1 31.500 9z" fill="#db4437"/><path d="M17 17l-.5 16.600A16.600 16.600 0 0 1 2.700 8.500z" fill="#0f9d58"/><path d="M17 8.800h14.400a16.600 16.600 0 0 1-14.900 24.800l7.600-13z" fill="#ffcd40"/><circle cx="17" cy="17" r="7.700" fill="#f1f1f1"/><circle cx="17" cy="17" r="6.200" fill="#4c8bf5"/></svg></div>
    <div><svg width="36" height="36" viewBox="0 0 36 36"><defs><linearGradient id="st" x1="0" y1="0" x2="1" y2="1"><stop offset="0" stop-color="#0a66b8"/><stop offset="1" stop-color="#283057"/></linearGradient></defs><path d="M.5 4.500h35V32q0 3.500-3.500 3.500H4Q.5 35.500.5 32z" fill="url(#st)"/><path d="M9.500 7.500v-6h17v6" fill="none" stroke="#21c0f5" stroke-width="2"/><path d="M10.500 12.500h7v7h-7z" fill="#f25022"/><path d="M18.500 12.500h7v7h-7z" fill="#7fba00"/><path d="M10.500 20.500h7v7h-7z" fill="#00a4ef"/><path d="M18.500 20.500h7v7h-7z" fill="#ffb900"/></svg></div>
    <div class="run"><svg width="36" height="34" viewBox="0 0 36 34"><defs><linearGradient id="fo" x1="0" y1="0" x2="1" y2="1"><stop offset="0" stop-color="#ffd86b"/><stop offset="1" stop-color="#fcb40c"/></linearGradient></defs><path d="M0 1h12l3 3h21v6H0z" fill="#dea005"/><path d="M0 7h12l3-2.500h21V33H0z" fill="url(#fo)"/><path d="M6 33v-7q0-3 3-3h18q3 0 3 3v7z" fill="#0f6fc5"/><path d="M11 28h14" stroke="#0a4a8a" stroke-width="2"/></svg></div>
    <div><svg width="34" height="34" viewBox="0 0 34 34" fill="none" stroke="#222"><circle cx="15" cy="14.500" r="12.500" stroke-width="3" fill="#fff" fill-opacity=".4"/><path d="M23.500 23.500l7.500 8" stroke-width="4.500" stroke-linecap="round"/></svg></div>
    <div><svg width="36" height="36" viewBox="0 0 36 36"><defs><linearGradient id="wi" x1="0" y1="1" x2="1" y2="0"><stop offset="0" stop-color="#0078d4"/><stop offset="1" stop-color="#4cd2ff"/></linearGradient></defs><path d="M.5.500h17v17H.5zM18.500.500h17v17h-17zM.5 18.500h17v17H.5zM18.500 18.500h17v17h-17z" fill="url(#wi)"/></svg></div>
  </div>
</footer>
</body>
</html>
```
FILE: styles.css
```css
* { box-sizing: border-box; }
body { margin: 0; width: 1920px; height: 1080px; overflow: hidden; background: #f0f0f0; color: #242424;
  font-family: "Open Sans", "Noto Sans", "Liberation Sans", sans-serif; font-size: 19px; }
span, b, em { white-space: nowrap; }
svg { display: block; flex: none; overflow: visible; }
.defs { position: absolute; }
.cv { width: 10px; height: 7px; }

/* title bar */
.title-bar { display: grid; height: 72px; padding-left: 28px; align-items: center;
  grid-template-columns: 72px 72px 66px 64px 49px 149px 189px 536px 373px 37px 73px 164px auto; }
.user-name { width: 138px; font-size: 20px; letter-spacing: .5px; }
.autosave { width: 137px; font-size: 20px; }
.search { display: flex; align-items: center; justify-content: flex-end; gap: 21px; width: 518px; height: 48px; padding-right: 30px;
  border: 1px solid #d6d6d6; border-radius: 6px; background: #fafafa; color: #616161; font-size: 22px; }
.doc-name { display: flex; justify-content: space-between; width: 132px; font-size: 19px; }
.doc-name span:last-child { font-size: 18px; line-height: 26px; }
.toggle { width: 65px; height: 30px; padding: 3px; border: 1px solid #555; border-radius: 15px; background: #fff; }
.toggle i { display: block; width: 22px; height: 22px; margin-left: 35px; border-radius: 50%; background: #616161; }

/* tabs */
.tabs { display: grid; height: 45px; padding-left: 18px; align-items: center; font-size: 20.500px;
  grid-template-columns: 109px 953px 78px 88px 94px 93px 114px 145px 91px 68px auto; }
.tabs button { display: flex; align-items: center; justify-content: center; gap: 7px; height: 36px; padding: 0; font: 22px "Open Sans", sans-serif; border-radius: 6px; }
.share { width: 97px; border: 0; background: #107c41; color: #fff; }
.tabs .share { font-size: 21px; }
.comments { width: 116px; border: 1px solid #d1d1d1; background: #fff; color: #242424; }
.tabs > span { height: 36px; line-height: 36px; }
.tabs .active { width: 38px; font-weight: 700; border-bottom: 3px solid #0f703b; }

/* ribbon */
.ribbon { display: flex; width: 1896px; height: 150px; margin-left: 12px; border: 1px solid #d1d1d1; border-radius: 10px; background: #fff; }
.group { display: flex; flex-direction: column; justify-content: space-between; height: 134px; margin-top: 6px; border-left: 1px solid #d1d1d1; }
.g-collapse { width: 116px; border: 0; }
.collapse { margin: auto 0 6px 11px; }
.g-edit { width: 216px; } .g-cells { width: 139px; } .g-styles { width: 251px; } .g-number { width: 242px; }
.g-align { width: 341px; } .g-font { width: 351px; } .g-clip { width: 149px; } .g-undo { width: 84px; }
.body { display: flex; }
.rows { display: flex; flex-direction: column; }
.label { display: flex; align-items: center; height: 16px; font-size: 16px; line-height: 16px; }
.label span { flex: 1; text-align: center; }
.label svg { margin: 2px 6px 0 4px; }
.big { display: flex; flex-direction: column; align-items: center; width: 77px; direction: rtl; }
.big > span { display: flex; align-items: center; height: 22px; line-height: 22px; gap: 8px; }
.big > span:nth-of-type(1) { margin-top: 4px; }
.g-edit .big { width: 67px; }
.g-edit .big:first-child { margin-left: 9px; }
.g-styles .big:first-child { margin-left: 4px; }
.g-styles .big:last-child { margin-left: 4px; }
.stack > div { display: flex; align-items: center; height: 39px; }
.stack { margin-top: -2px; }
.narrow { padding-left: 6px; }
.narrow > div { gap: 11px; padding-left: 3px; }
.narrow > .w { padding-left: 0; gap: 13px; }
.cells { width: 138px; padding-right: 18px; }
.cells > div { justify-content: flex-end; gap: 6px; }
.cells > div:nth-child(1) .cv { margin-right: 15px; }
.cells > div:nth-child(2) .cv { margin-right: 15px; }
.cells > div:nth-child(3) .cv { margin-right: 4px; }
.combo { display: flex; align-items: center; justify-content: space-between; height: 36px; padding: 0 3px 0 1px; border: 1px solid #d1d1d1; border-radius: 6px; background: #fff; color: #111; font-size: 18px; }
.combo.wide { width: 218px; margin: 11px 0 0 11px; font-size: 20px; }
.combo.size { width: 64px; }
.combo.face { width: 182px; justify-content: flex-start; gap: 9px; }
.sep { display: block; width: 1px; height: 36px; background: #d1d1d1; }
.sep.tall { height: 94px; margin: 9px 14px 0 9px; }
.tool-row { display: grid; align-items: center; }
.number-row { height: 60px; padding-left: 17px; grid-template-columns: 39px 33px 17px 32px 37px 24px auto; }
.dec, .abc { font: 14px "Noto Sans", sans-serif; fill: #3b3a39; }
.dec { letter-spacing: -.5px; }
.abc { font-size: 16px; }
.ln { stroke: #3b3a39; stroke-width: 1.500; fill: none; }
.merge-col { width: 71px; padding-top: 16px; }
.merge-col > div:first-child { margin-left: 43px; }
.merge { display: flex; align-items: center; gap: 13px; margin: 23px 0 0 17px; }
.align-top { height: 58px; grid-template-columns: 26px 39px 20px 34px 46px 39px 22px; margin-left: -1px; }
.align-bottom { height: 38px; padding-left: 47px; grid-template-columns: 40px 39px 39px 39px 22px; }
.pressed { display: flex; align-items: flex-end; justify-content: center; width: 36px; height: 36px; padding-bottom: 5px; border: 1px solid #707070; border-radius: 6px; background: #ebebeb; }
.up { margin-bottom: 8px; }
.font-top { height: 58px; padding-left: 20px; grid-template-columns: 37px 32px 67px auto; }
.font-bottom { height: 40px; padding-left: 15px; grid-template-columns: 24px 37px 24px 33px 8px 24px 33px 8px 28px 42px 37px auto; }
.fmt { font-size: 19px; line-height: 24px; padding-bottom: 2px; }
.fmt.u { text-decoration: underline; text-underline-offset: 4px; text-decoration-thickness: 1.500px; }
.fmt.i { padding-left: 1px; font-family: "Noto Sans", sans-serif; font-style: italic; }
.fmt.b { font-weight: 700; font-size: 18px; }
.clip { width: 66px; padding-left: 17px; }
.clip > div { gap: 14px; }
.clip > div:last-child { padding-bottom: 3px; }
.clip .solo { padding-left: 24px; }
.paste { width: 78px; }
.undo { padding-left: 17px; }
.undo > div { gap: 14px; }
.off .cv { color: #a3a3a3; }

/* formula bar */
.formula-bar { display: flex; align-items: center; height: 56px; padding-left: 12px; padding-top: 2px; }
.box { display: flex; align-items: center; justify-content: space-between; height: 34px; border: 1px solid #d1d1d1; border-radius: 6px; background: #fff; }
.name-box { width: 152px; padding: 0 7px; font: 21.500px "Liberation Sans", sans-serif; }
.dots { display: block; width: 3px; height: 15px; margin: 0 14px; background: repeating-linear-gradient(#adadad 0 3px, transparent 3px 6px); }
.formula-bar .dots { margin: 0 13px 0 14px; }
.fx { width: 110px; padding: 0 8px; }
.fx em { font: italic 26px "Liberation Serif", serif; -webkit-text-stroke: .3px; }
.input { flex: 1; margin: 0 12px 0 6px; padding-right: 6px; justify-content: flex-end; }

/* sheet */
.sheet { display: flex; height: 619px; }
.vscroll { display: flex; flex-direction: column; align-items: center; width: 26px; margin-left: 2px; height: 619px; padding: 8px 0 5px; border-radius: 12px; background: #f4f4f4; }
.vscroll i { width: 12px; height: 483px; margin-top: 7px; border-radius: 6px; background: #707070; }
.down { margin-top: auto; }
.grid { position: relative; width: 1892px; margin-left: 2px; }
.heads { display: grid; height: 28px; border-bottom: 1px solid #9f9f9f; grid-template-columns: 69px repeat(12, 104px) 184px 243px 104px auto; color: #444; font-size: 20px; }
.heads span { padding-left: 1px; border-right: 1px solid #d6d6d6; text-align: center; line-height: 32px; height: 27px; }
.heads span:first-child { padding-right: 34px; }
.heads .sel { height: 28px; background: #e1e1e1; color: #217346; border-bottom: 2px solid #217346; }
.heads .corner { border: 0; padding: 4px 0 0 3px; }
.corner i { display: block; width: 20px; height: 20px; background: #dedede; clip-path: polygon(0 0, 100% 100%, 0 100%); }
.row { display: grid; grid-template: 100% / 1316px 184px 243px 104px auto; height: 28px; border-left: 1px solid #9f9f9f; background: #fff; }
.row > div { position: relative; border-right: 1px solid #e1e1e1; border-bottom: 1px solid #e1e1e1; font-family: "Liberation Sans", sans-serif; color: #000; white-space: nowrap; }
.row .blank { border-right: 0; background: linear-gradient(to left, #e1e1e1 1px, transparent 1px) -36px 0 / 104px 100%; }
.row > div:nth-child(4) { border-right-color: #9f9f9f; }
.row b { padding-left: 1px; border-bottom: 1px solid #d6d6d6; background: #f0f0f0; color: #444; font-size: 20px; font-weight: 400; text-align: center; line-height: 29px; }
.tall { height: 45px; }
.row.tall b { line-height: 59px; }
.row.first b { line-height: 57px; }
.first > div:nth-child(2), .first > div:nth-child(3) { border-bottom-color: #c6c6c6; }
.data > div:nth-child(2), .data > div:nth-child(3) { border-color: #c6c6c6; text-align: center; font-size: 35.700px; line-height: 46px; }
.data .blank { box-shadow: inset -1px 0 #c6c6c6; }
.t { padding-left: 5px; font-size: 35px; line-height: 48px; }
.data > .he:nth-child(n) { font-size: 33px; line-height: 49px; }
.data > div:nth-child(4) { padding-right: 4px; text-align: right; font-size: 22.700px; line-height: 59px; }
.row.last { height: 24px; border-bottom: 1px solid #9f9f9f; overflow: hidden; }
.last > div, .row.last b { border-bottom: 0; }
.row.current b { background: #e1e1e1; color: #217346; box-shadow: inset 2px 0 #217346; }
.selection { position: absolute; left: -2px; top: -2px; width: 246px; height: 31px; border: 2px solid #217346; z-index: 2; }
.selection::after { content: ""; position: absolute; left: -4px; bottom: -4px; width: 7px; height: 7px; background: #217346; border: solid #fff; border-width: 1px 1px 0 0; }
.chart { position: absolute; left: 570px; top: 67px; overflow: hidden; }
.ch-title { font: bold 30px "Open Sans", sans-serif; fill: #f2f2f2; text-anchor: middle; letter-spacing: 2px; text-shadow: 0 3px 3px rgba(0,0,0,.5); }
.ch-y, .ch-l { font: 16px "Open Sans", sans-serif; fill: #d9d9d9; }
.ch-x { font: 18px "Liberation Sans", sans-serif; fill: #d9d9d9; text-anchor: middle; }

/* sheet tabs */
.sheet-tabs { display: flex; height: 34px; background: #f4f4f4; border-bottom: 1px solid #fff; }
.hscroll { display: flex; align-items: center; width: 753px; padding: 0 6px 2px 35px; }
.hscroll i { width: 26px; height: 12px; margin: 0 7px 0 auto; border-radius: 6px; background: #707070; }
.grip { display: flex; align-items: center; width: 34px; padding: 0 0 2px 1px; background: #efefef; }
.plus { margin: 4px 40px 0 869px; }
.tab { width: 82px; height: 32px; margin-top: -2px; border: 1px solid #9f9f9f; border-top: 0; border-bottom: 2px solid #217346; background: #fff; color: #217346; font-size: 20px; line-height: 32px; text-align: center; }
.nav { margin: 9px 0 0 46px; }
.nav + .nav { margin-left: 27px; }

/* status bar */
.status { display: grid; height: 32px; padding-left: 13px; align-items: center; background: #f4f4f4; color: #333; font-size: 16px;
  grid-template-columns: 59px 20px 156px 39px 60px 41px 1490px auto; }
.zoom { display: flex; align-items: center; width: 148px; height: 17px; background: linear-gradient(#616161, #616161) 0 8px / 100% 2px no-repeat; }
.zoom i { width: 8px; height: 17px; margin: 0 auto; background: #616161; }
.view { display: flex; align-items: center; justify-content: center; width: 60px; height: 32px; padding-right: 2px; background: #dfdfdf; }

/* taskbar */
.taskbar { display: grid; height: 72px; padding-left: 28px; align-items: center; border-top: 1px solid rgba(0,0,0,.08); color: #1b1b1b;
  grid-template-columns: 107px 36px 36px 53px 57px 213px auto;
  background: linear-gradient(95deg, #ebebf5 0, #ebebf5 110px, #cdf5f2 160px, #c0efee 240px, #c0efee 400px, #c9f2d6 500px, #d9f4c0 590px, #d9f4c6 900px, #e7fab4 1060px, #e9fbb0 1180px, #cff7e4 1245px, #c8f6f6 1290px, #d6eef6 1350px, #eeeef8 1410px, #ebf0f8 1920px); }
.clock { display: flex; flex-direction: column; font-size: 16px; line-height: 23px; }
.lang { font-size: 18px; }
.apps { display: grid; grid-template-columns: repeat(13, 66px); }
.apps > div { display: flex; position: relative; align-items: center; justify-content: center; height: 56px; }
.apps .open { width: 56px; margin-left: 5px; border: 1px solid rgba(0,0,0,.06); border-radius: 6px; background: rgba(255,255,255,.6); }
.open::after, .run::after { content: ""; position: absolute; bottom: 0; width: 24px; height: 5px; border-radius: 3px; background: #0078d4; }
.run::after { width: 9px; background: #7d8878; }
.jb { font: bold 12.500px "Noto Sans", sans-serif; fill: #fff; }
```
